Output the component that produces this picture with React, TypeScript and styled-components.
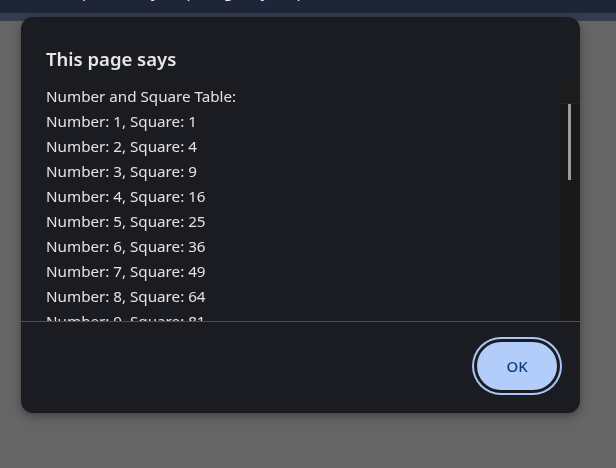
import React from "react";
import styled, { createGlobalStyle } from "styled-components";

const Global = createGlobalStyle`
  html, body { margin: 0; padding: 0; }
  body {
    background: #656565;
    width: 616px;
    height: 468px;
    overflow: hidden;
    font-family: "Noto Sans", "Open Sans", sans-serif;
  }
`;

const Page = styled.div`
  width: 616px;
  height: 468px;
  display: flex;
  flex-direction: column;
`;

const TopBar = styled.div`
  height: 13px;
  background: #1e2538;
  overflow: hidden;
`;

const TopText = styled.div`
  color: #eef0f4;
  font-size: 15px;
  line-height: 15px;
  white-space: nowrap;
  margin-top: -16px;
  padding-left: 82px;
  word-spacing: 24px;
`;

const Stripe = styled.div`
  height: 8px;
  background: #353d4f;
`;

const Dialog = styled.div`
  position: fixed;
  left: 21px;
  top: 17px;
  width: 559px;
  height: 396px;
  background: #1b1c21;
  border-radius: 12px;
  box-shadow: 0 3px 10px rgba(0, 0, 0, 0.35);
  display: flex;
  flex-direction: column;
  overflow: hidden;
`;

const Title = styled.h1`
  margin: 0;
  padding: 30px 25px 0 25px;
  height: 35px;
  font-size: 18.5px;
  font-weight: 600;
  line-height: 24px;
  color: #e6e7ea;
`;

const ScrollArea = styled.div`
  display: flex;
  height: 239px;
`;

const Content = styled.div`
  flex: 1;
  overflow: hidden;
  padding: 2px 0 0 25px;
`;

const Line = styled.div`
  font-size: 15.2px;
  line-height: 25px;
  color: #e3e3e3;
  white-space: nowrap;
`;

const Track = styled.div`
  width: 20px;
  background: #19191a;
  display: flex;
  flex-direction: column;
`;

const TrackTop = styled.div`
  height: 21px;
  background: #1c1c1d;
  border-bottom: 1px solid #252526;
`;

const Thumb = styled.div`
  width: 3px;
  height: 76px;
  margin-left: 8px;
  background: #9b9b9b;
`;

const Footer = styled.div`
  flex: 1;
  border-top: 1px solid #4b505b;
  display: flex;
  align-items: center;
  justify-content: flex-end;
  padding-right: 23px;
  padding-bottom: 3px;
`;

const OkButton = styled.button`
  width: 80px;
  height: 48px;
  border: none;
  border-radius: 999px;
  background: #b3cdfa;
  color: #0c3d7d;
  font-family: "Noto Sans", "Open Sans", sans-serif;
  font-size: 15px;
  font-weight: 500;
  box-shadow: 0 0 0 3px #1b1c21, 0 0 0 5px #a9c6f7;
  cursor: pointer;
`;

const rows = Array.from({ length: 10 }, (_, i) => i + 1);

export default function App() {
  return (
    <>
      <Global />
      <Page>
        <TopBar>
          <TopText>
            p , y p g y p
          </TopText>
        </TopBar>
        <Stripe />
      </Page>
      <Dialog role="dialog">
        <Title>This page says</Title>
        <ScrollArea>
          <Content>
            <Line>Number and Square Table:</Line>
            {rows.map((n) => (
              <Line key={n}>
                Number: {n}, Square: {n * n}
              </Line>
            ))}
          </Content>
          <Track>
            <TrackTop />
            <Thumb />
          </Track>
        </ScrollArea>
        <Footer>
          <OkButton>OK</OkButton>
        </Footer>
      </Dialog>
    </>
  );
}
